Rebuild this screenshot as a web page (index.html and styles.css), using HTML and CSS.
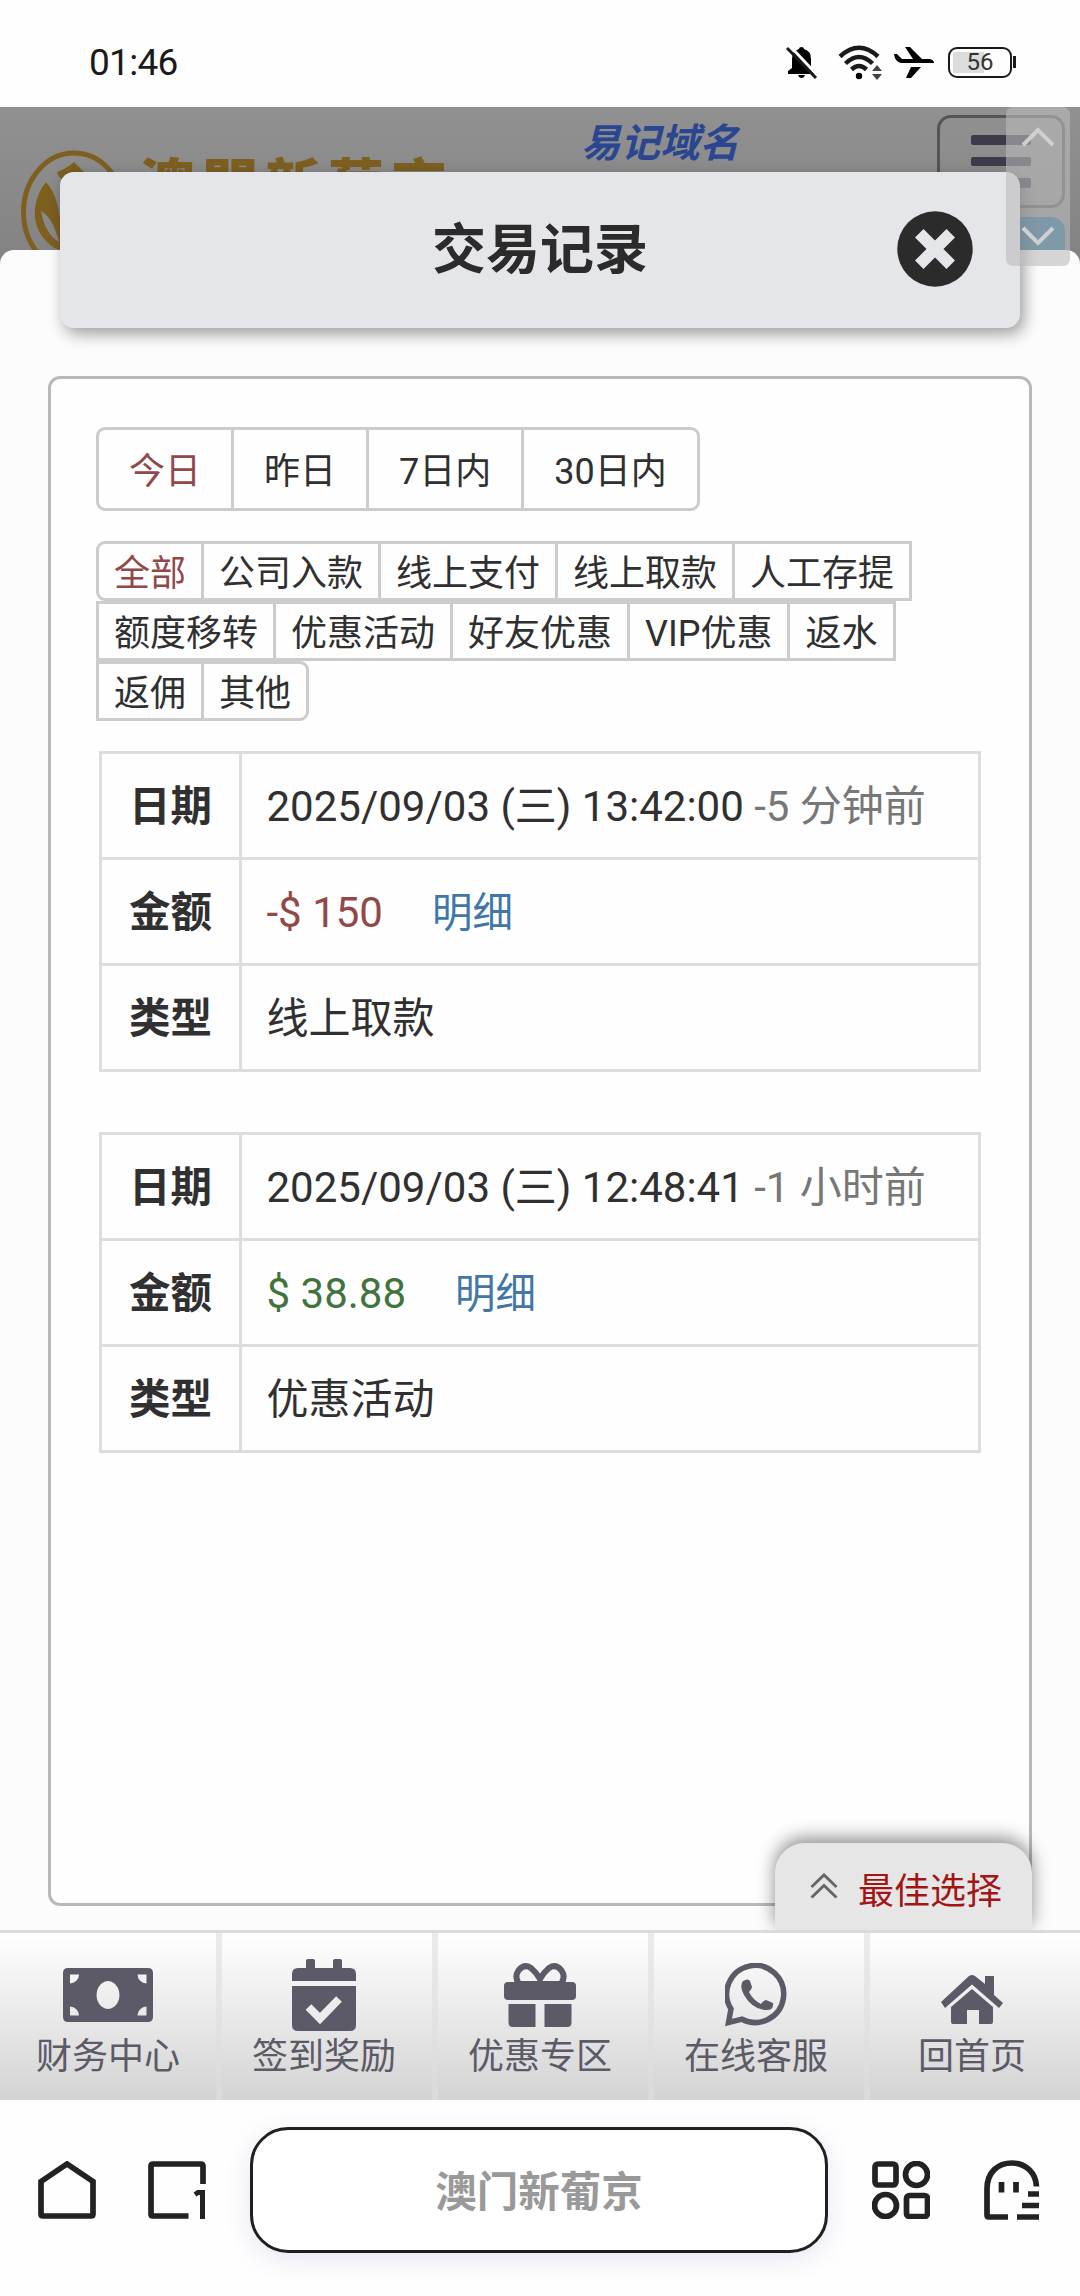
FILE: index.html
```html
<!DOCTYPE html>
<html lang="zh-CN">
<head>
<meta charset="utf-8">
<title>交易记录</title>
<link rel="stylesheet" href="styles.css">
</head>
<body>
<div class="status">
  <span class="clock">01:46</span>
  <div class="status-icons">
    <svg class="i-bell" width="32" height="34" viewBox="0 0 32 34"><path d="M13 3q0-2 2.500-2t2.500 2q7 2 7 10v9l4 3v3H2v-3l4-3v-9q0-8 7-10z"/><path d="M12 29h7q-1 3-3.500 3T12 29z"/><path d="M3-1 33 31" stroke="#fff" stroke-width="3"/><path d="M1 2 30 32" stroke="#1a1a1a" stroke-width="3"/></svg>
    <svg class="i-wifi" width="46" height="36" viewBox="0 0 46 36"><g fill="none" stroke="#1a1a1a" stroke-width="4.500"><path d="M2 11.500Q21-6 40 11.500"/><path d="M7.500 18.500q13.500-13 27 0"/><path d="M13.500 24.500q7.500-7 15 0"/></g><circle cx="21" cy="31" r="3.200"/><path d="M39 20l5 6H34zM39 35l5-6H34z" fill="#444"/></svg>
    <svg class="i-plane" width="40" height="33" viewBox="0 0 40 33"><path d="M0 8h3l5 5h11L11 1h5l12 12h8q4 1 4 4H7Q1 16 0 8zM17 21h10L17 32h-5z"/></svg>
    <div class="battery"><span>56</span></div>
  </div>
</div>

<div class="page">
  <div class="site-header">
    <svg class="emblem" width="106" height="124" viewBox="0 0 106 124"><ellipse cx="53" cy="62" rx="50.500" ry="59" fill="none" stroke="#7d6020" stroke-width="5"/><path d="M53 12q8 9 18 16l-8 10q-5-4-10-4l-14-6q-2-3-3-6 9-3 17-10z" fill="#7d6020"/><path d="M25 32Q42 50 40 100q-6 0-14-8-14-14-12-34 2-15 11-26z" fill="#7d6020"/><path d="M20 61Q32 68 38 92 24 84 20 61z" fill="#8b8a8a"/></svg>
    <span class="brand">澳門新葡京</span>
    <span class="domain">易记域名</span>
    <div class="menu-btn"><i></i><i></i><i></i></div>
    <div class="blue-btn"></div>
  </div>

  <div class="sheet">
    <div class="panel">
      <div class="tabs days">
        <span class="on">今日</span><span>昨日</span><span>7日内</span><span>30日内</span>
      </div>
      <div class="kinds">
        <div class="tabs"><span class="on">全部</span><span>公司入款</span><span>线上支付</span><span>线上取款</span><span>人工存提</span></div>
        <div class="tabs"><span>额度移转</span><span>优惠活动</span><span>好友优惠</span><span>VIP优惠</span><span>返水</span></div>
        <div class="tabs"><span>返佣</span><span>其他</span></div>
      </div>
      <table class="record">
        <tr><th>日期</th><td>2025/09/03 (三) 13:42:00 <span class="ago">-5 分钟前</span></td></tr>
        <tr><th>金额</th><td><span class="out">-$ 150</span><a class="detail">明细</a></td></tr>
        <tr><th>类型</th><td>线上取款</td></tr>
      </table>
      <table class="record">
        <tr><th>日期</th><td>2025/09/03 (三) 12:48:41 <span class="ago">-1 小时前</span></td></tr>
        <tr><th>金额</th><td><span class="in">$ 38.88</span><a class="detail">明细</a></td></tr>
        <tr><th>类型</th><td>优惠活动</td></tr>
      </table>
    </div>
  </div>

  <div class="title-bar">
    <h1>交易记录</h1>
    <svg class="close" width="76" height="76" viewBox="0 0 76 76"><circle cx="38" cy="38" r="37.700" fill="#2b2b2b"/><path d="M26.500 26.500l23 23m0-23l-23 23" stroke="#e5e6ea" stroke-width="12" stroke-linecap="square"/></svg>
  </div>

  <div class="scroller">
    <svg width="34" height="20" viewBox="0 0 34 20"><path d="M2 18 17 3 32 18"/></svg>
    <svg width="34" height="20" viewBox="0 0 34 20"><path d="M2 2 17 17 32 2"/></svg>
  </div>

  <div class="best">
    <svg width="28" height="26" viewBox="0 0 28 26"><path d="M1.500 14 14 2l12.500 12M1.500 24.500 14 12.500l12.500 12" fill="none" stroke="#666" stroke-width="3"/></svg>
    <span>最佳选择</span>
  </div>
</div>

<div class="nav">
  <div class="nav-item"><div class="ico"><svg width="90" height="54" viewBox="0 0 90 54"><path fill-rule="evenodd" d="M5 0h80q5 0 5 5v44q0 5-5 5H5q-5 0-5-5V5q0-5 5-5zM45 13a11.500 14 0 1 0 .01 0zM7 6.500V15.500A9 9 0 0 0 16 6.500zM83.500 6.500h-9A9 9 0 0 0 83.500 15.500zM7 47.500V38.500A9 9 0 0 1 16 47.500zM83.500 47.500h-9A9 9 0 0 1 83.500 38.500z"/></svg></div>财务中心</div>
  <div class="nav-item"><div class="ico"><svg width="64" height="72" viewBox="0 0 64 72"><rect x="14" width="9" height="14" rx="2"/><rect x="41" width="9" height="14" rx="2"/><path d="M0 22v-7q0-6 6-6h52q6 0 6 6v7zM0 27h64v39q0 6-6 6H6q-6 0-6-6z"/><path d="M16.500 48 28 59.500 47 40" fill="none" stroke="#ececec" stroke-width="8"/></svg></div>签到奖励</div>
  <div class="nav-item"><div class="ico"><svg class="gift" width="72" height="64" viewBox="0 0 72 64"><rect y="19" width="72" height="18" rx="4"/><path d="M4.500 41H31.500V64H9q-4.500 0-4.500-4.500zM40.500 41h27v18.500q0 4.500-4.500 4.500H40.500z"/><path d="M15 21Q10 14 14.500 7.500 20 .5 27 5q5 4 9 11Q40 9 45 5q7-4.500 12.500 2.500Q62 14 57 21z" fill="none" stroke="#5b5a66" stroke-width="6"/></svg></div>优惠专区</div>
  <div class="nav-item"><div class="ico"><svg class="wa" width="64" height="64" viewBox="0 0 64 64"><path d="M17 56.200A28.500 28.500 0 1 0 6 46L3.500 59.500z" fill="none" stroke="#5b5a66" stroke-width="5.500"/><path d="M18 18q5-3 7 0l2 6q0 2-3 5 4 8 12 12 3-4 5-4l7 3q1 8-8 7Q27 46 19 32 14 23 18 18z"/></svg></div>在线客服</div>
  <div class="nav-item"><div class="ico"><svg class="home" width="62" height="50" viewBox="0 0 62 50"><path d="M44 1h9v19l9 8-4 5L31 9.500 4 33l-4-6L28 1q3-2 6 0l10 8z"/><path d="M31 14 52 32V47q0 2-2 2H38V35H26V49H12q-2 0-2-2V32z"/></svg></div>回首页</div>
</div>

<div class="browser">
  <svg class="b-home" width="58" height="58" viewBox="0 0 58 58"><path d="M3 20.500 29 3 55 20.500V53q0 2-2 2H5q-2 0-2-2z"/></svg>
  <svg class="b-tabs" width="58" height="58" viewBox="0 0 58 58"><path d="M55 23V5q0-2-2-2H5Q3 3 3 5V53q0 2 2 2H40.500"/><path d="M47 33.500 50 31.500h4.500V58" stroke-width="5"/></svg>
  <div class="address">澳门新葡京</div>
  <svg class="b-grid" width="58" height="58" viewBox="0 0 58 58"><rect x="3" y="3" width="21" height="21" rx="3"/><circle cx="44.500" cy="13.500" r="11"/><circle cx="13.500" cy="44.500" r="11"/><rect x="34.500" y="34.500" width="21" height="21" rx="3"/></svg>
  <svg class="b-ghost" width="56" height="60" viewBox="0 0 56 60"><path d="M24 57H5q-2 0-2-2V29C3 12 14 3 28 3s24 10 24.500 23.500M33 57H55M38 45.500H55M44 34H55M17.500 22V32.500M32 22V32.500"/></svg>
</div>
</body>
</html>
```

FILE: styles.css
```css
* { box-sizing: border-box; }
body {
  margin: 0;
  width: 1080px;
  height: 2296px;
  display: flex;
  flex-direction: column;
  overflow: hidden;
  background: #fefefe;
  color: #303030;
  font-family: Roboto, "Noto Sans CJK SC", sans-serif;
}
svg { display: block; flex: none; }

.status {
  height: 107px;
  flex: none;
  display: flex;
  justify-content: space-between;
  align-items: center;
  padding: 18px 68px 0 89px;
  color: #1a1a1a;
}
.clock { font-size: 37px; letter-spacing: -0.7px; }
.status-icons { display: flex; align-items: center; }
.i-wifi { margin-left: 20px; }
.i-plane { margin-left: 10px; }
.battery {
  position: relative;
  width: 64px;
  height: 31px;
  margin-left: 14px;
  border: 2.5px solid #1a1a1a;
  border-radius: 9px;
  font-size: 24px;
  line-height: 27px;
  text-align: center;
  color: #333;
  background: linear-gradient(90deg, #dcdcdc 31px, #fff 31px) 3px 3px / 53px 21px no-repeat;
}
.battery::after {
  content: "";
  position: absolute;
  right: -6px;
  top: 7px;
  width: 3px;
  height: 12px;
  background: #1a1a1a;
}

.page { position: relative; flex: none; height: 1823px; overflow: hidden; }
.site-header {
  position: relative;
  height: 163px;
  background: linear-gradient(#929191, #838282);
}
.emblem { position: absolute; left: 21px; top: 43px; }
.brand {
  position: absolute;
  left: 139px;
  top: 39px;
  font: 900 56px/70px "Noto Sans CJK TC", sans-serif;
  letter-spacing: 7px;
  color: #7d6020;
}
.domain {
  position: absolute;
  left: 581px;
  top: 12px;
  font-size: 39.5px;
  line-height: 50px;
  font-weight: bold;
  font-style: italic;
  color: #2b4690;
}
.menu-btn {
  position: absolute;
  left: 937px;
  top: 8px;
  width: 128px;
  height: 93px;
  border: 3px solid #555;
  border-radius: 14px;
  padding: 17px 31px;
  display: flex;
  flex-direction: column;
  gap: 12px;
}
.menu-btn i { height: 10px; border-radius: 2px; background: #3c3b4b; }
.blue-btn {
  position: absolute;
  left: 937px;
  top: 110px;
  width: 128px;
  height: 50px;
  border-radius: 14px;
  background: #25668c;
}

.sheet {
  position: relative;
  height: 1680px;
  margin-top: -20px;
  padding: 126px 48px 0;
  border-radius: 14px 14px 0 0;
  background: #fcfcfc;
}
.panel {
  height: 1530px;
  border: 3px solid #b8b8b8;
  border-radius: 12px;
  padding: 48px 48px 0 45px;
  background: #fefefe;
}
.tabs { display: flex; font-size: 36px; line-height: 54px; }
.tabs span {
  border: 3px solid #ccc;
  padding: 3px 15px 0;
  height: 60px;
  white-space: nowrap;
}
.tabs span + span { margin-left: -3px; }
.tabs .on { color: #914848; }
.days span { height: 84px; padding: 3px 30px 0; line-height: 78px; }
.days span:first-child { border-radius: 9px 0 0 9px; }
.days span:last-child { border-radius: 0 9px 9px 0; }
.kinds { margin-top: 30px; }
.kinds .tabs:first-child span:first-child { border-radius: 9px 0 0 9px; }
.kinds .tabs:last-child span:last-child { border-radius: 0 9px 9px 0; }

.record {
  width: 882px;
  margin: 30px 0 0 3px;
  border-collapse: separate;
  border-spacing: 0;
  border: solid #ddd;
  border-width: 3px 0 0 3px;
  font-size: 42px;
  line-height: 50px;
}
.record + .record { margin-top: 60px; }
.record th, .record td {
  height: 106px;
  padding: 3px 0 0;
  border: solid #ddd;
  border-width: 0 3px 3px 0;
  white-space: nowrap;
}
.record th { width: 140px; text-align: center; font-size: 41.5px; }
.record td { padding-left: 24.5px; }
.ago { color: #777; }
.out { color: #914848; }
.in { color: #41743c; }
.detail { margin-left: 49px; font-size: 40.5px; color: #4076a8; }

.title-bar {
  position: absolute;
  left: 60px;
  top: 65px;
  width: 960px;
  height: 156px;
  display: flex;
  align-items: center;
  justify-content: center;
  border-radius: 14px;
  background: #e5e6ea;
  box-shadow: 4px 6px 16px rgba(0, 0, 0, .38);
}
.title-bar h1 { margin: 2px 0 0; font-size: 54px; line-height: 70px; color: #2b2b2b; }
.close { position: absolute; right: 47px; top: 39px; }

.scroller {
  position: absolute;
  left: 1006px;
  top: 0;
  width: 64px;
  height: 159px;
  padding: 20px 15px;
  display: flex;
  flex-direction: column;
  justify-content: space-between;
  border-radius: 7px;
  background: rgba(187, 187, 187, .6);
}
.scroller path { fill: none; stroke: #cfd0d1; stroke-width: 4; }

.best {
  position: absolute;
  right: 48px;
  bottom: 0;
  width: 257px;
  height: 87px;
  display: flex;
  align-items: center;
  gap: 20px;
  padding: 0 0 1px 35px;
  border-radius: 30px 30px 0 0;
  background: #e6e6e6;
  box-shadow: 0 -5px 18px rgba(0, 0, 0, .45);
  font-size: 36px;
  color: #a31515;
}
.best span { padding-top: 3px; }

.nav {
  flex: none;
  height: 170px;
  border-top: 3px solid #dadada;
  display: flex;
  background: linear-gradient(#fff, #d3d3d3);
}
.nav-item {
  width: 216px;
  display: flex;
  flex-direction: column;
  align-items: center;
  font-size: 36px;
  line-height: 47px;
  color: #5b5a66;
}
.nav-item + .nav-item { background: linear-gradient(#ebebeb, #dadada) 0 0 / 6px 100% no-repeat; }
.ico { height: 101px; padding-top: 23px; display: flex; align-items: center; }
.ico svg { fill: #5b5a66; }
.ico .wa { margin-left: 2px; }
.ico .home { margin-top: 10px; }

.browser {
  flex: none;
  height: 196px;
  display: flex;
  align-items: center;
  padding: 0 40px 16px 38px;
}
.browser svg { fill: none; stroke: #222; stroke-width: 5.7; }
.b-tabs { margin-left: 52px; }
.address {
  width: 578px;
  height: 126px;
  margin: 0 44px;
  border: 3px solid #202020;
  border-radius: 38px;
  font-size: 41.5px;
  font-weight: bold;
  line-height: 126px;
  text-align: center;
  color: #999;
  background: #fff;
  box-shadow: 0 6px 26px rgba(60, 70, 170, .13);
}
.b-ghost { margin-left: 54px; }
```
